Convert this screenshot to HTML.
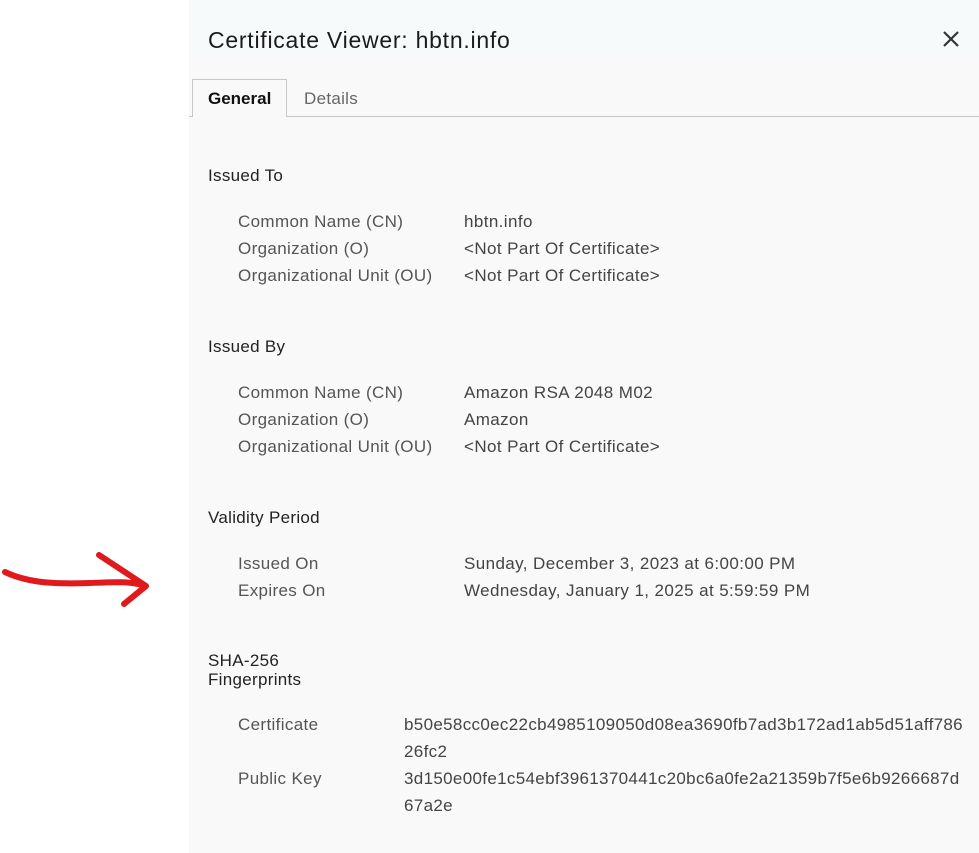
<!DOCTYPE html>
<html><head><meta charset="utf-8"><style>
body{margin:0;width:979px;height:853px;background:#fff;font-family:"Liberation Sans",sans-serif;position:relative;overflow:hidden}
.panel{position:absolute;left:189px;top:0;width:790px;height:853px;background:#f9f9f9}
.hdr{position:absolute;left:0;top:0;width:790px;height:58px;background:#f6fafb}
.t{position:absolute;white-space:nowrap}
.title{left:19px;top:27px;font-size:23px;letter-spacing:0.75px;color:#1b1b1b}
.h{font-size:17px;letter-spacing:0.3px;color:#222;left:19px}
.l{font-size:17px;letter-spacing:0.35px;color:#555;left:49px}
.v{font-size:17px;letter-spacing:0.4px;color:#444;left:275px}
.f{font-size:17px;letter-spacing:0.33px;color:#444;left:215px}
.line{position:absolute;left:0;top:116px;width:790px;height:1px;background:#c8c8c8}
.tab{position:absolute;left:3px;top:79px;width:95px;height:38px;border:1px solid #c8c8c8;border-bottom:none;background:#f9f9f9;box-sizing:border-box}
</style></head><body>
<svg style="position:absolute;left:0;top:540px" width="160" height="80"><path d="M5 32 C30 44 60 44 90 43 C115 42 130 41 146 46 M99 15 L146 46 L124 64" fill="none" stroke="#e0191c" stroke-width="6" stroke-linecap="round" stroke-linejoin="round"/></svg>
<div class="panel">
<div class="hdr"></div>
<div class="t title">Certificate Viewer: hbtn.info</div>
<svg style="position:absolute;left:754px;top:31px" width="16" height="16"><path d="M1 1 L15 15 M15 1 L1 15" stroke="#333" stroke-width="2.2"/></svg>
<div class="line"></div>
<div class="tab"></div>
<div class="t" style="left:19px;top:89px;font-size:17px;font-weight:bold;color:#111">General</div>
<div class="t" style="left:115px;top:89px;font-size:17px;letter-spacing:0.3px;color:#666">Details</div>
<div class="t h" style="top:166px">Issued To</div>
<div class="t l" style="top:212px">Common Name (CN)</div><div class="t v" style="top:212px">hbtn.info</div>
<div class="t l" style="top:239px">Organization (O)</div><div class="t v" style="top:239px">&lt;Not Part Of Certificate&gt;</div>
<div class="t l" style="top:266px">Organizational Unit (OU)</div><div class="t v" style="top:266px">&lt;Not Part Of Certificate&gt;</div>
<div class="t h" style="top:337px">Issued By</div>
<div class="t l" style="top:383px">Common Name (CN)</div><div class="t v" style="top:383px">Amazon RSA 2048 M02</div>
<div class="t l" style="top:410px">Organization (O)</div><div class="t v" style="top:410px">Amazon</div>
<div class="t l" style="top:437px">Organizational Unit (OU)</div><div class="t v" style="top:437px">&lt;Not Part Of Certificate&gt;</div>
<div class="t h" style="top:508px">Validity Period</div>
<div class="t l" style="top:554px">Issued On</div><div class="t v" style="top:554px">Sunday, December 3, 2023 at 6:00:00 PM</div>
<div class="t l" style="top:581px">Expires On</div><div class="t v" style="top:581px">Wednesday, January 1, 2025 at 5:59:59 PM</div>
<div class="t h" style="top:651px;line-height:19px">SHA-256<br>Fingerprints</div>
<div class="t l" style="top:715px">Certificate</div><div class="t f" style="top:711px;line-height:27px">b50e58cc0ec22cb4985109050d08ea3690fb7ad3b172ad1ab5d51aff786<br>26fc2</div>
<div class="t l" style="top:769px">Public Key</div><div class="t f" style="top:765px;line-height:27px">3d150e00fe1c54ebf3961370441c20bc6a0fe2a21359b7f5e6b9266687d<br>67a2e</div>
</div>
</body></html>
